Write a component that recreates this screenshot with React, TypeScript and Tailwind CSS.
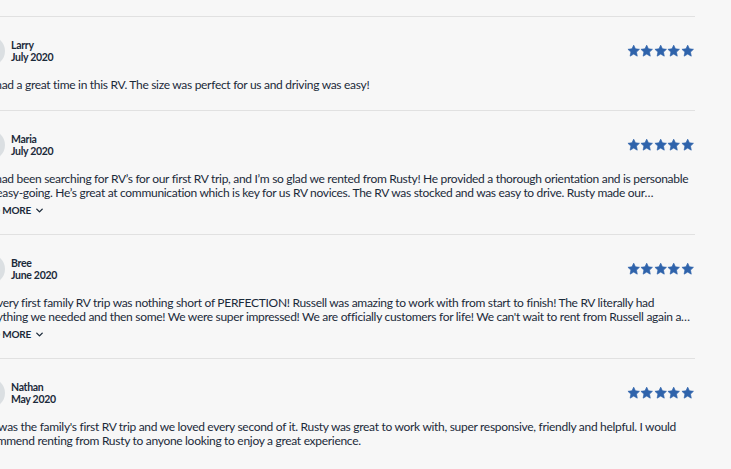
import { ChevronDown } from "lucide-react";

interface Review {
  name: string;
  date: string;
  body: string;
  more: boolean;
}

const reviews: Review[] = [
  {
    name: "Larry",
    date: "July 2020",
    body: "We had a great time in this RV. The size was perfect for us and driving was easy!",
    more: false,
  },
  {
    name: "Maria",
    date: "July 2020",
    body: "We had been searching for RV’s for our first RV trip, and I’m so glad we rented from Rusty! He provided a thorough orientation and is personable and easy-going. He’s great at communication which is key for us RV novices. The RV was stocked and was easy to drive. Rusty made our experience so much fun and we can’t wait to book again.",
    more: true,
  },
  {
    name: "Bree",
    date: "June 2020",
    body: "Our very first family RV trip was nothing short of PERFECTION! Russell was amazing to work with from start to finish! The RV literally had everything we needed and then some! We were super impressed! We are officially customers for life! We can't wait to rent from Russell again and again!",
    more: true,
  },
  {
    name: "Nathan",
    date: "May 2020",
    body: "This was the family's first RV trip and we loved every second of it. Rusty was great to work with, super responsive, friendly and helpful. I would recommend renting from Rusty to anyone looking to enjoy a great experience.",
    more: false,
  },
];

function Star() {
  return (
    <svg viewBox="0 0 24 24" className="h-[14px] w-[13.4px]" fill="#2f63ab">
      <path
        d="M12 1.5l3.1 6.6 7.2.9-5.3 5 1.4 7.2L12 17.6l-6.4 3.6 1.4-7.2-5.3-5 7.2-.9z"
        stroke="#2f63ab"
        strokeWidth={1.2}
        strokeLinejoin="round"
      />
    </svg>
  );
}

export default function App() {
  return (
    <div className="min-h-[469px] overflow-hidden bg-[#f7f7f7] text-[#1b2a3a] [font-family:Lato,'Liberation_Sans',sans-serif]">
      <div className="-ml-[25px] w-[720px] pt-4">
        {reviews.map((r) => (
          <section
            key={r.name}
            className={`border-t border-[#e1e1e1] pt-[19px] ${r.more ? "pb-[17px]" : "pb-[18px]"}`}
          >
            <div className="flex h-[30px] items-center">
              <div className="h-[30px] w-[30px] shrink-0 rounded-full bg-[#dbdfe2]" />
              <div className="ml-[6px] flex flex-col text-[10.5px] font-bold leading-[12px] tracking-[-0.3px]">
                <span>{r.name}</span>
                <span>{r.date}</span>
              </div>
              <div className="ml-auto mr-[1px] flex">
                {[0, 1, 2, 3, 4].map((i) => (
                  <Star key={i} />
                ))}
              </div>
            </div>
            <p className="mt-3 line-clamp-2 text-[12px] leading-[14px] tracking-[-0.3px]">{r.body}</p>
            {r.more && (
              <button className="-ml-[1px] mt-[3px] flex items-center gap-[3px] text-[10px] font-bold leading-[14px] tracking-[-0.2px]">
                READ MORE
                <ChevronDown className="h-[11px] w-[11px]" strokeWidth={3} />
              </button>
            )}
          </section>
        ))}
      </div>
    </div>
  );
}
